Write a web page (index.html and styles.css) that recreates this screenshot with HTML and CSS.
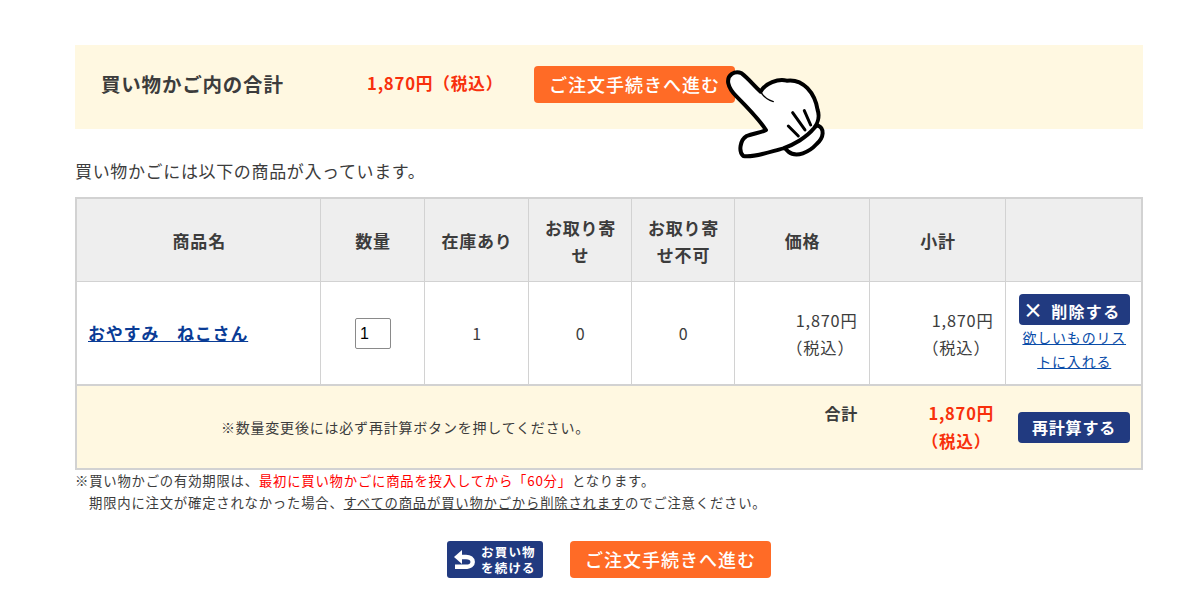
FILE: index.html
```html
<!DOCTYPE html>
<html lang="ja">
<head>
    <meta charset="UTF-8">
    <title>買い物かご</title>
    <link rel="stylesheet" href="styles.css">
</head>
<body>
    <div class="cart">
        <div class="summary">
            <h2 class="summary-title">買い物かご内の合計</h2>
            <p class="summary-price">1,870円（税込）</p>
            <a href="#" class="btn-order">ご注文手続きへ進む</a>
            <svg class="hand" viewBox="0 0 320 120" aria-hidden="true">
                <g transform="scale(0.3333)" fill="#fff" stroke="#000" stroke-width="12" stroke-linejoin="round" stroke-linecap="round">
                    <path d="M893 226 C915 235 912 262 890 282 C868 306 830 325 805 305 L790 290 Z"/>
                    <path d="M625 100 C620 75 645 60 665 70 C685 85 702 107 722 125 C735 100 775 85 800 92 C850 85 885 130 893 180 C900 200 892 222 882 235 C860 262 820 285 790 295 C760 302 700 325 670 318 C655 305 660 270 680 258 C700 250 725 248 738 240 C715 205 680 170 650 140 C635 125 628 115 625 100 Z"/>
                    <path d="M722 125 C730 140 745 150 760 155" fill="none" stroke-width="4"/>
                    <path d="M818 188 L855 240 M853 182 L872 225 M805 228 L835 258" fill="none" stroke-width="9"/>
                </g>
            </svg>
        </div>

        <p class="lead">買い物かごには以下の商品が入っています。</p>

        <table class="cart-table">
            <colgroup>
                <col class="col-name">
                <col class="col-qty">
                <col class="col-stock">
                <col class="col-order">
                <col class="col-noorder">
                <col class="col-price">
                <col class="col-sub">
                <col class="col-action">
            </colgroup>
            <thead>
                <tr>
                    <th>商品名</th>
                    <th>数量</th>
                    <th>在庫あり</th>
                    <th>お取り寄せ</th>
                    <th>お取り寄せ不可</th>
                    <th>価格</th>
                    <th>小計</th>
                    <th></th>
                </tr>
            </thead>
            <tbody>
                <tr>
                    <td class="item-name"><a href="#">おやすみ　ねこさん</a></td>
                    <td class="center"><input class="qty" type="text" value="1"></td>
                    <td class="center">1</td>
                    <td class="center">0</td>
                    <td class="center">0</td>
                    <td class="money">1,870円<br><span class="tax">（税込）</span></td>
                    <td class="money">1,870円<br><span class="tax">（税込）</span></td>
                    <td class="actions">
                        <a href="#" class="btn-navy btn-delete"><span class="cross">×</span> 削除する</a>
                        <a href="#" class="wish">欲しいものリストに入れる</a>
                    </td>
                </tr>
            </tbody>
            <tfoot>
                <tr>
                    <td colspan="5" class="note">※数量変更後には必ず再計算ボタンを押してください。</td>
                    <td class="total-label">合計</td>
                    <td class="total-price">1,870円<br><span class="tax">（税込）</span></td>
                    <td class="actions"><a href="#" class="btn-navy">再計算する</a></td>
                </tr>
            </tfoot>
        </table>

        <p class="notice">※買い物かごの有効期限は、<span class="red">最初に買い物かごに商品を投入してから「60分」</span>となります。<br>
        <span class="indent">期限内に注文が確定されなかった場合、<u>すべての商品が買い物かごから削除されます</u>のでご注意ください。</span></p>

        <div class="bottom-btns">
            <a href="#" class="btn-back">
                <svg viewBox="0 0 21 19" class="back-icon" aria-hidden="true">
                    <path d="M0 7 L8 0 V14 Z" fill="#fff"/>
                    <path d="M6 7 H12 C16 7 18.7 9 18.7 12 C18.7 15 16 16.8 12 16.8 H1" fill="none" stroke="#fff" stroke-width="4.5"/>
                </svg>
                <span class="back-label">お買い物<br>を続ける</span>
            </a>
            <a href="#" class="btn-order">ご注文手続きへ進む</a>
        </div>
    </div>
</body>
</html>
```

FILE: styles.css
```css
body {
    margin: 0;
    font-family: "Noto Sans CJK JP", "Noto Sans", sans-serif;
    color: #3c3c3c;
    background: #fff;
    letter-spacing: 0.05em;
}

.cart {
    width: 1068px;
    margin-left: 75px;
    padding-top: 45px;
}

.summary {
    position: relative;
    display: flex;
    align-items: center;
    box-sizing: border-box;
    height: 84px;
    padding: 0 0 6px 26px;
    background: #fff8e1;
}

.summary-title {
    width: 266px;
    margin: 0 0 1px;
    font-size: 19.5px;
    font-weight: 700;
}

.summary-price {
    width: 167px;
    margin: 0 0 3px;
    color: #f8300c;
    font-size: 16.7px;
    font-weight: 700;
}

.btn-order {
    display: block;
    box-sizing: border-box;
    width: 201px;
    height: 37px;
    padding-left: 15px;
    line-height: 36px;
    border-radius: 4px;
    background: #ff6b26;
    color: #fff;
    font-size: 18px;
    font-weight: 500;
    letter-spacing: 1px;
    text-decoration: none;
    white-space: nowrap;
}

.hand {
    position: absolute;
    left: 445px;
    top: 5px;
    width: 320px;
    height: 120px;
}

.lead {
    margin: 31px 0 15px;
    font-size: 17px;
    letter-spacing: 0.65px;
    line-height: 22px;
}

.cart-table {
    width: 1066px;
    table-layout: fixed;
    border-collapse: collapse;
    border: 2px solid #d2d2d2;
    font-size: 16px;
}

.col-name { width: 244px; }
.col-qty { width: 104px; }
.col-stock { width: 104px; }
.col-order { width: 103px; }
.col-noorder { width: 103px; }
.col-price { width: 135px; }
.col-sub { width: 136px; }
.col-action { width: 137px; }

th, td {
    box-sizing: border-box;
    border: 1px solid #d2d2d2;
    padding: 0 12px;
}

th {
    height: 83px;
    padding: 2px 11px 0 13px;
    background: #eee;
    font-size: 17px;
    font-weight: 700;
    line-height: 27px;
}

tbody td {
    height: 104px;
    padding-top: 2px;
    line-height: 27px;
}

tfoot td {
    height: 84px;
    border: 0;
    background: #fff8e1;
    line-height: 28px;
}

tfoot {
    border-top: 2px solid #d2d2d2;
}

tbody .center {
    padding-left: 13px;
    padding-right: 11px;
    text-align: center;
}

tbody .item-name {
    padding: 0 11px;
    font-weight: 700;
    font-size: 17px;
    line-height: 24px;
}

.item-name a {
    color: #0a3c96;
}

.qty {
    display: block;
    box-sizing: border-box;
    width: 36px;
    height: 31px;
    margin: 0 auto;
    padding: 0 4px;
    border: 1px solid #8a8a8a;
    border-radius: 2px;
    font-family: "Liberation Sans", sans-serif;
    font-size: 16px;
    color: #000;
}

tbody .money {
    padding-right: 11px;
    font-size: 16.3px;
    text-align: right;
}

.tax {
    padding-right: 3px;
}

tbody .actions, tfoot .actions {
    padding-left: 13px;
    padding-right: 11px;
    text-align: center;
}

.btn-navy {
    display: block;
    height: 31px;
    line-height: 31px;
    border-radius: 4px;
    background: #213a80;
    color: #fff;
    font-size: 16px;
    font-weight: 700;
    text-decoration: none;
    white-space: nowrap;
}

.btn-delete {
    padding-right: 5px;
    letter-spacing: 1.3px;
}

.cross {
    font-size: 20px;
    margin-right: 2px;
}

.wish {
    display: block;
    color: #0a4ca8;
    font-size: 14px;
    line-height: 24px;
}

.note {
    text-align: center;
    font-size: 14px;
}

tfoot .total-label {
    vertical-align: top;
    padding-top: 13px;
    padding-right: 11px;
    text-align: right;
    font-weight: 700;
    font-size: 16px;
}

.total-price {
    padding-right: 11px;
    text-align: right;
    color: #f8300c;
    font-weight: 700;
    font-size: 16.5px;
}

.notice {
    margin: 0;
    font-size: 13.35px;
    line-height: 22px;
}

.red {
    color: #f00;
}

.indent {
    padding-left: 14px;
}

.bottom-btns {
    display: flex;
    justify-content: center;
    align-items: center;
    gap: 27px;
    margin-top: 27px;
}

.btn-back {
    display: flex;
    align-items: center;
    gap: 6px;
    box-sizing: border-box;
    width: 96px;
    height: 37px;
    padding-left: 7px;
    border-radius: 3px;
    background: #213a80;
    color: #fff;
    text-decoration: none;
    white-space: nowrap;
}

.back-label {
    font-size: 12.5px;
    font-weight: 700;
    letter-spacing: 1.2px;
    line-height: 15.5px;
}

.back-icon {
    width: 21px;
    height: 19px;
    flex: none;
}
```
